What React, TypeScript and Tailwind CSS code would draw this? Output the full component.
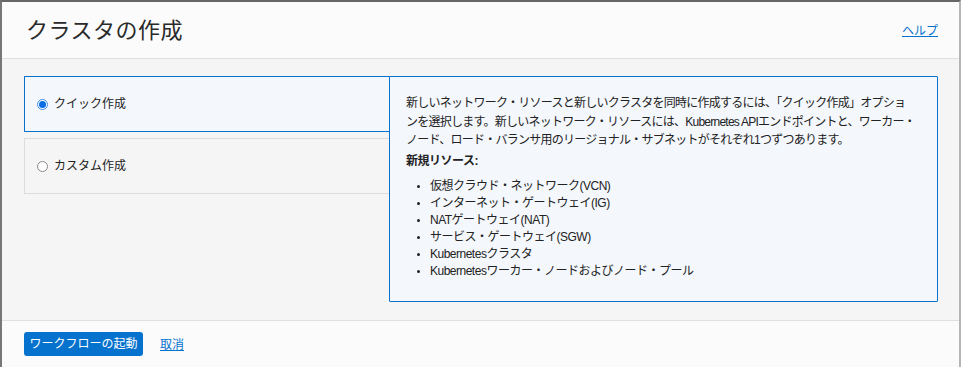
const font = "font-['Liberation_Sans','Noto_Sans_CJK_JP',sans-serif]";

function Radio({ checked }: { checked: boolean }) {
  return checked ? (
    <span className="flex h-[11px] w-[11px] items-center justify-center rounded-full border border-[#3f8ef0] bg-white">
      <span className="h-[7px] w-[7px] rounded-full bg-[#0a6fe6]" />
    </span>
  ) : (
    <span className="h-[11px] w-[11px] rounded-full border border-[#8a8a8a] bg-white" />
  );
}

const resources = [
  "仮想クラウド・ネットワーク(VCN)",
  "インターネット・ゲートウェイ(IG)",
  "NATゲートウェイ(NAT)",
  "サービス・ゲートウェイ(SGW)",
  "Kubernetesクラスタ",
  "Kubernetesワーカー・ノードおよびノード・プール",
];

export default function App() {
  return (
    <div
      className={`${font} flex h-[367px] w-[961px] flex-col overflow-hidden border-t-2 border-l-2 border-r-2 border-t-[#666] border-l-[#777] border-r-[#b5b5b5] text-[#222]`}
    >
      <div className="flex h-[57px] items-center justify-between border-b border-[#e0e0e0] bg-[#fbfbfb] pl-[24px] pr-[21px]">
        <h1 className="text-[22px] font-normal tracking-[0.5px] text-[#2a2a2a]">クラスタの作成</h1>
        <a href="#" className="mt-[2px] text-[12px] text-[#0572ce] underline">
          ヘルプ
        </a>
      </div>

      <div className="flex h-[261px] bg-[#f5f5f5] pl-[22px] pr-[21px] pt-[17px]">
        <div className="flex w-[366px] flex-col gap-[6px]">
          <div className="flex h-[56px] items-center gap-[6px] border border-[#0572ce] bg-[#f4f7fb] pl-[12px] text-[12px]">
            <Radio checked />
            <span>クイック作成</span>
          </div>
          <div className="flex h-[56px] items-center gap-[6px] border border-r-0 border-[#dcdcdc] bg-[#f5f5f5] pl-[12px] text-[12px]">
            <Radio checked={false} />
            <span>カスタム作成</span>
          </div>
        </div>
        <div className="-ml-px h-[226px] flex-1 rounded-[1px] border border-[#0572ce] bg-[#f4f7fc] pl-[16px] pt-[17px] text-[12px] text-[#222]">
          <p className="whitespace-nowrap leading-[18.5px] tracking-[-0.75px]">
            新しいネットワーク・リソースと新しいクラスタを同時に作成するには、「クイック作成」オプショ
            <br />
            ンを選択します。新しいネットワーク・リソースには、Kubernetes APIエンドポイントと、ワーカー・
            <br />
            ノード、ロード・バランサ用のリージョナル・サブネットがそれぞれ1つずつあります。
          </p>
          <p className="mt-[2px] font-bold tracking-[-0.5px]">新規リソース:</p>
          <ul className="mt-[8px] list-disc pl-[24px] text-[12px] leading-[17px] tracking-[-0.5px] marker:text-[10px]">
            {resources.map((r) => (
              <li key={r}>{r}</li>
            ))}
          </ul>
        </div>
      </div>

      <div className="flex flex-1 items-start gap-[17px] border-t border-[#e0e0e0] bg-[#fbfbfb] pl-[22px] pt-[11px]">
        <button className="h-[24px] w-[119px] rounded-[3px] bg-[#0572ce] text-[12px] text-white">
          ワークフローの起動
        </button>
        <a href="#" className="mt-[4px] text-[12px] text-[#0572ce] underline">
          取消
        </a>
      </div>
    </div>
  );
}
